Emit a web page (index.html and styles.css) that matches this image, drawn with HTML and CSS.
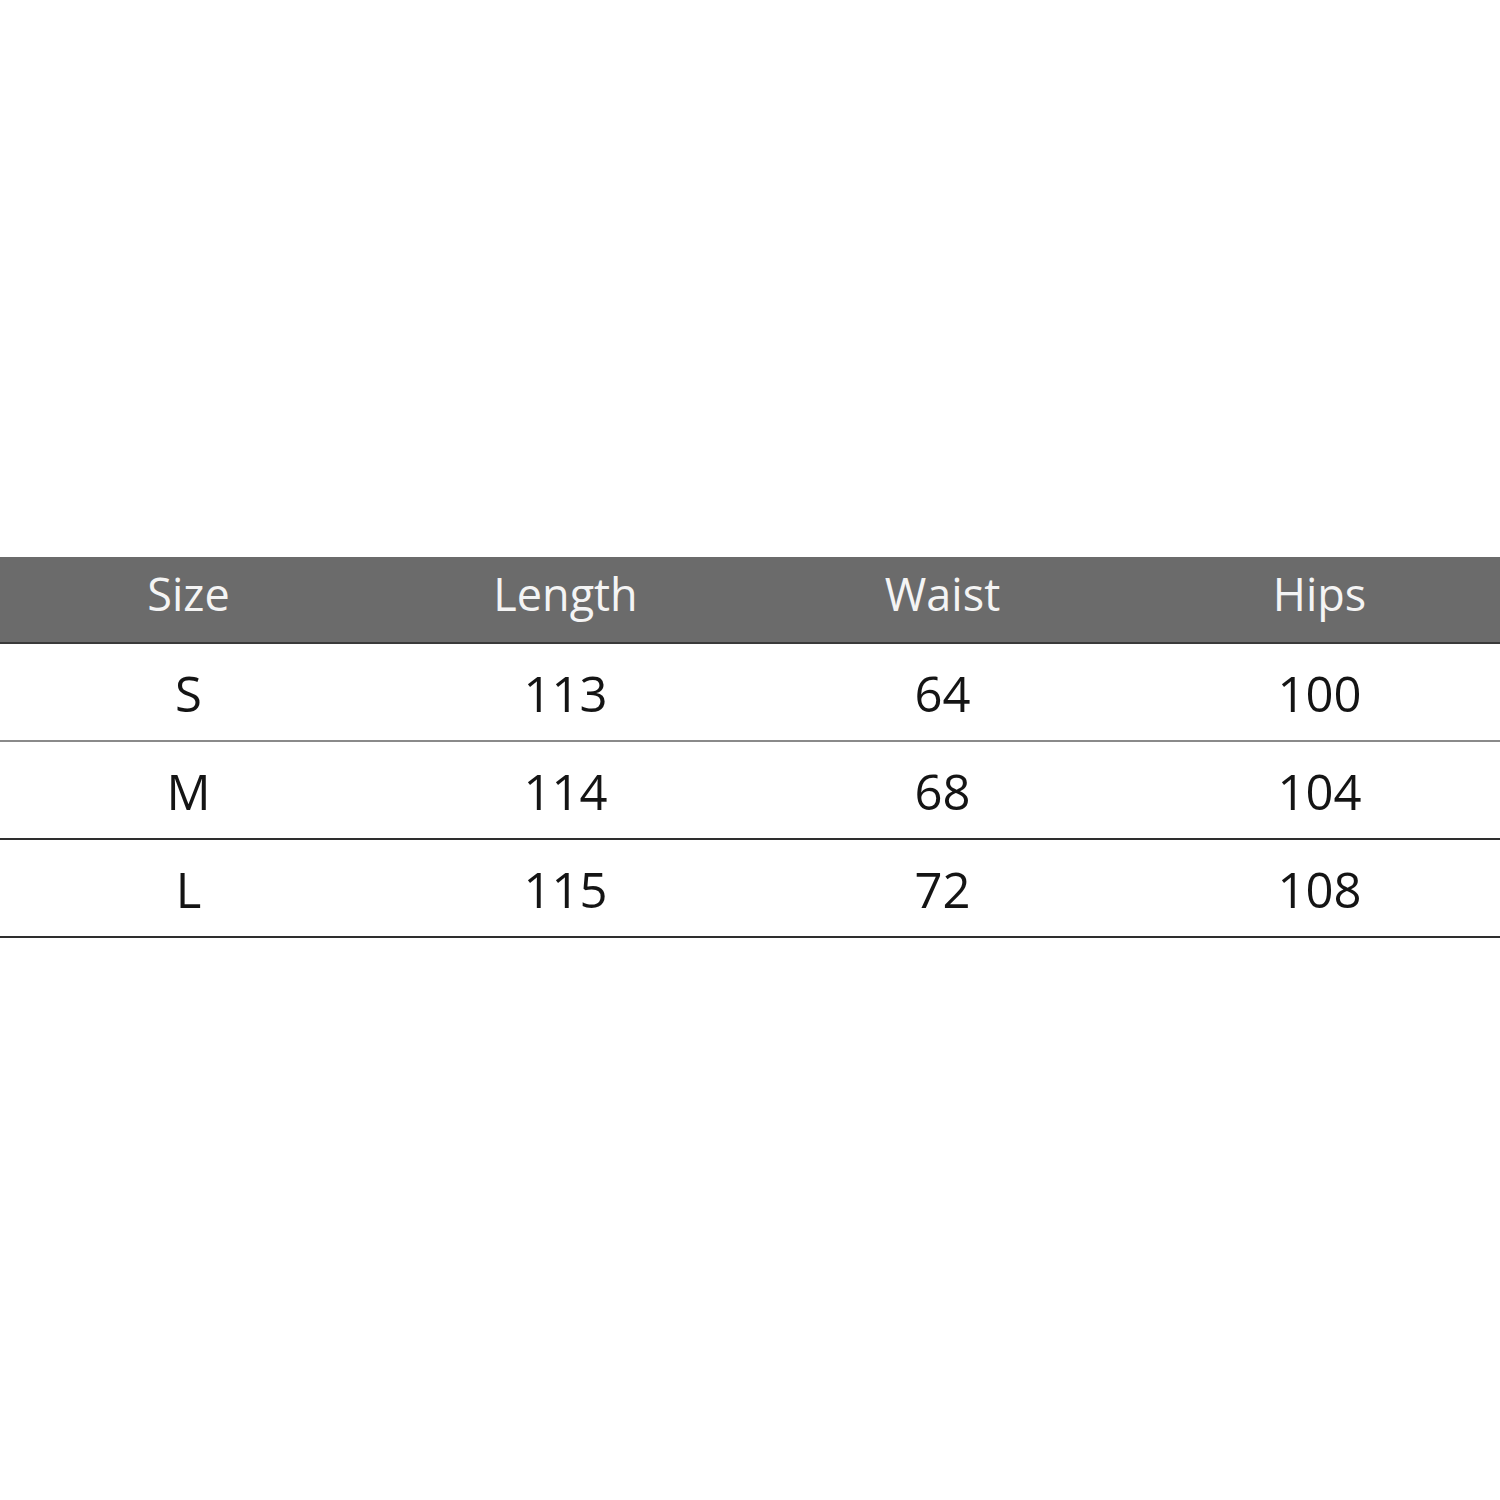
FILE: index.html
```html
<!DOCTYPE html>
<html>
<head>
<meta charset="utf-8">
<link rel="stylesheet" href="styles.css">
</head>
<body>
<div class="page">
  <div class="table">
    <div class="row head">
      <div class="cell">Size</div>
      <div class="cell">Length</div>
      <div class="cell">Waist</div>
      <div class="cell">Hips</div>
    </div>
    <div class="row body light">
      <div class="cell">S</div>
      <div class="cell">113</div>
      <div class="cell">64</div>
      <div class="cell">100</div>
    </div>
    <div class="row body">
      <div class="cell">M</div>
      <div class="cell">114</div>
      <div class="cell">68</div>
      <div class="cell">104</div>
    </div>
    <div class="row body">
      <div class="cell">L</div>
      <div class="cell">115</div>
      <div class="cell">72</div>
      <div class="cell">108</div>
    </div>
  </div>
</div>
</body>
</html>
```
FILE: styles.css
```css
html, body {
  margin: 0;
  padding: 0;
  background: #ffffff;
}
.page {
  width: 1500px;
  height: 1500px;
  overflow: hidden;
  padding-top: 557px;
  box-sizing: border-box;
  font-family: "Open Sans", "Liberation Sans", sans-serif;
}
.table {
  width: 1508px;
}
.row {
  display: grid;
  grid-template-columns: repeat(4, 377px);
}
.cell {
  display: flex;
  align-items: center;
  justify-content: center;
}
.head {
  height: 85px;
  background: #6b6b6b;
  color: #f4f4f4;
  font-size: 45px;
  border-bottom: 2px solid #3a3a3a;
}
.head .cell {
  padding-bottom: 12px;
}
.body {
  height: 96px;
  color: #141414;
  font-size: 49px;
  border-bottom: 2px solid #2e2e2e;
}
.body .cell {
  padding-top: 1px;
}
.body.light {
  border-bottom-color: #8a8a8a;
}
```
